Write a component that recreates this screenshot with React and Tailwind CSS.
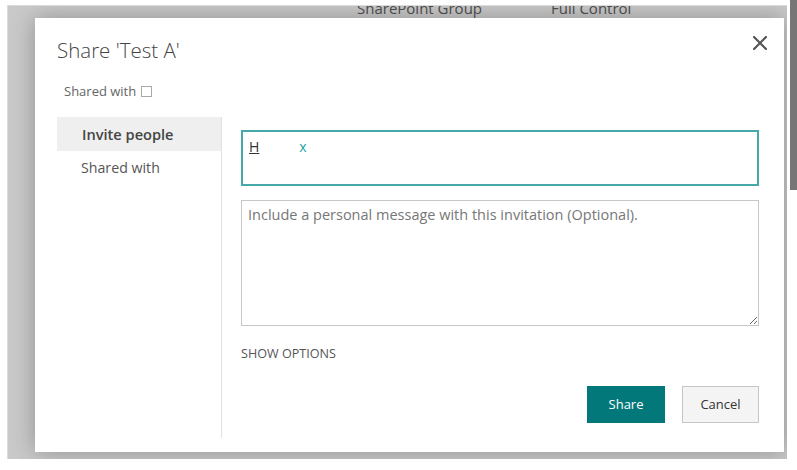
import React from 'react';

const font = { fontFamily: '"Open Sans", "Noto Sans", sans-serif' };

const CloseIcon = () => (
    <svg width="14" height="14" viewBox="0 0 14 14" className="text-[#555]">
        <path d="M1 1 L13 13 M13 1 L1 13" stroke="currentColor" strokeWidth="2.2" strokeLinecap="square" />
    </svg>
);

const App = () => {
    return (
        <div className="relative w-[797px] h-[470px] bg-white overflow-hidden" style={font}>

            {/* page scrollbar */}
            <div className="absolute top-0 right-0 w-[7px] h-[190px] bg-[#767676]"></div>

            {/* dimmed page behind the dialog */}
            <div className="ml-[7px] mt-[5px] w-[780px] h-[454px] bg-[#c9c9c9] border-l border-t border-[#dadada] flex flex-col overflow-hidden">
                <div className="h-[12px] shrink-0 overflow-hidden flex pl-[349px] text-[15px] leading-[15px] text-[#4f4f4f]">
                    <span className="w-[194px] -mt-[5px]">SharePoint Group</span>
                    <span className="-mt-[5px]">Full Control</span>
                </div>

                <div className="flex-1 pl-[27px] pr-[3px] pb-[7px]">
                    {/* Dialog */}
                    <div className="h-full bg-white shadow-[0_0_22px_rgba(0,0,0,0.28)] flex flex-col">

                        {/* Header */}
                        <div className="flex justify-between items-start pl-[22px] pr-[17px] pt-[17px]">
                            <h1 className="text-[20.5px] leading-[30px] font-light text-[#444]">Share 'Test A'</h1>
                            <button className="mt-[1px]"><CloseIcon /></button>
                        </div>

                        <div className="flex items-center pl-[29px] mt-[16px] text-[13px] leading-[20px] text-[#666]">
                            Shared with
                            <span className="ml-[5px] w-[11px] h-[11px] border border-[#aaa] bg-white"></span>
                        </div>

                        {/* Body */}
                        <div className="flex flex-1 mt-[16px] pb-[14px]">
                            <nav className="w-[165px] ml-[22px] border-r border-[#e1e1e1] flex flex-col">
                                <div className="h-[34px] bg-[#efefef] flex items-center pl-[25px] pt-[2px] text-[14.6px] font-semibold text-[#444]">
                                    Invite people
                                </div>
                                <div className="h-[34px] flex items-center pl-[24px] text-[14.2px] text-[#555]">
                                    Shared with
                                </div>
                            </nav>

                            <div className="flex-1 pl-[19px] pr-[25px] pt-[13px] flex flex-col">
                                <div className="h-[56px] border-2 border-[#46a8a8] px-[6px] pt-[5px] flex items-start text-[14px] leading-[20px]">
                                    <span className="underline text-[#333]">H</span>
                                    <span className="ml-[40px] text-[#2a9fa6]">x</span>
                                </div>

                                <textarea
                                    className="mt-[14px] h-[126px] border border-[#c6c6c6] px-[6px] py-[4px] text-[14.5px] leading-[20px] text-[#333] placeholder:text-[#777] outline-none"
                                    placeholder="Include a personal message with this invitation (Optional)."
                                ></textarea>

                                <div className="mt-[19px] text-[12.6px] leading-[18px] text-[#555]">SHOW OPTIONS</div>

                                <div className="mt-[23px] flex justify-end gap-[17px]">
                                    <button className="w-[78px] h-[37px] bg-[#03787a] text-white text-[13px]">Share</button>
                                    <button className="w-[77px] h-[37px] bg-[#f4f4f4] border border-[#c6c6c6] text-[#333] text-[13px]">Cancel</button>
                                </div>
                            </div>
                        </div>
                    </div>
                </div>
            </div>
        </div>
    );
};

export default App;
